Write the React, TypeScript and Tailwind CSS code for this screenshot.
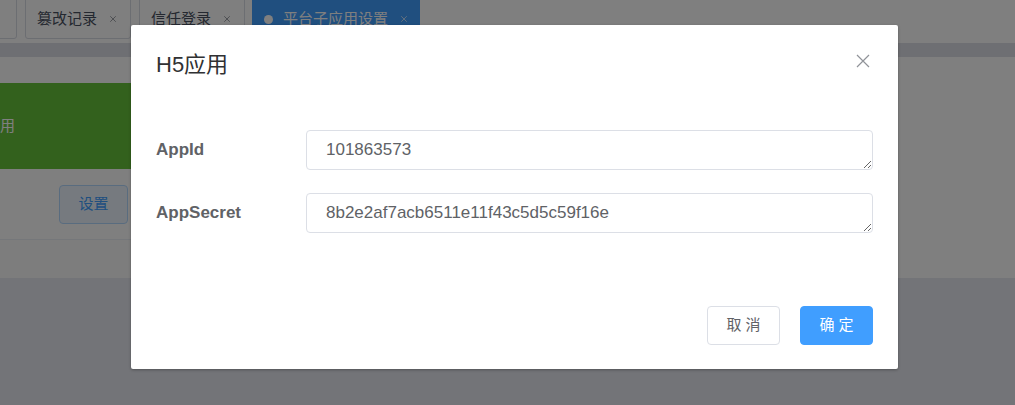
import { X } from "lucide-react";

const font = "font-['Liberation_Sans','Noto_Sans_CJK_SC',sans-serif]";

function Tab({ label, active, className }: { label?: string; active?: boolean; className?: string }) {
  return (
    <div
      className={[
        "-mt-px flex h-[40px] shrink-0 items-center rounded-b-[3px] border text-[15px]",
        active
          ? "border-[#409eff] bg-[#409eff] pl-[11px] text-white"
          : "border-[#d8dce5] bg-white pl-[11px] text-[#495060]",
        className ?? "",
      ].join(" ")}
    >
      {active && <span className="mr-[10px] h-[9px] w-[9px] rounded-full bg-white" />}
      {label && <span>{label}</span>}
      {label && (
        <X size={10} strokeWidth={1.6} className={active ? "ml-[11px] text-white" : "ml-[11px] text-[#6b6f78]"} />
      )}
    </div>
  );
}

function Field({ label, value }: { label: string; value: string }) {
  return (
    <div className="flex items-center">
      <label className="w-[150px] shrink-0 text-[17px] font-bold text-[#606266]">{label}</label>
      <textarea
        readOnly
        rows={1}
        defaultValue={value}
        className={`${font} h-[40px] flex-1 resize-y rounded-[4px] border border-[#dcdfe6] bg-white px-[19px] py-[9px] text-[17px] leading-[20px] text-[#606266] outline-none`}
      />
    </div>
  );
}

export default function App() {
  return (
    <div className={`${font} relative h-[405px] w-[1015px] overflow-hidden bg-[#e7e9f0]`}>
      {/* tabs */}
      <div className="flex h-[43px] gap-[8px] overflow-hidden bg-white">
        <Tab className="-ml-[24px] w-[41px]" />
        <Tab label="篡改记录" className="w-[106px]" />
        <Tab label="信任登录" className="w-[106px]" />
        <Tab label="平台子应用设置" active className="-ml-px w-[168px]" />
      </div>
      <div className="h-[14px] bg-[#dddfe6]" />

      {/* page card */}
      <div className="h-[221px] bg-white pt-[26px]">
        <div className="flex w-[145px] flex-col">
          <div className="flex h-[86px] items-center bg-[#67c23a] text-[15px] text-white">
            <span className="whitespace-nowrap">用</span>
          </div>
          <div className="h-[70px] pl-[59px] pt-[16px]">
            <button className="h-[39px] w-[69px] rounded-[4px] border border-[#b3d8ff] bg-[#ecf5ff] text-[15px] text-[#409eff]">
              设置
            </button>
          </div>
          <div className="h-[39px] border-t border-[#ebeef5] bg-[#fafafa]" />
        </div>
      </div>

      {/* overlay */}
      <div className="absolute inset-0 bg-black/50" />

      {/* dialog */}
      <div className="absolute left-[131px] top-[25px] flex h-[344px] w-[767px] flex-col rounded-[2px] bg-white px-[25px] shadow-[0_1px_3px_rgba(0,0,0,0.3)]">
        <div className="relative pt-[26px]">
          <h2 className="text-[22px] leading-[28px] text-[#303133]">H5应用</h2>
          <svg
            className="absolute right-[3px] top-[29px]"
            width="14"
            height="14"
            viewBox="0 0 14 14"
            fill="none"
            stroke="#909399"
            strokeWidth="1.2"
          >
            <path d="M1 1L13 13M13 1L1 13" />
          </svg>
        </div>

        <div className="mt-[51px] flex flex-col gap-[23px]">
          <Field label="AppId" value="101863573" />
          <Field label="AppSecret" value="8b2e2af7acb6511e11f43c5d5c59f16e" />
        </div>

        <div className="mt-[73px] flex justify-end gap-[20px]">
          <button className="h-[39px] w-[73px] rounded-[4px] border border-[#dcdfe6] bg-white text-[15px] text-[#606266]">
            取 消
          </button>
          <button className="h-[39px] w-[73px] rounded-[4px] border border-[#409eff] bg-[#409eff] text-[15px] text-white">
            确 定
          </button>
        </div>
      </div>
    </div>
  );
}
